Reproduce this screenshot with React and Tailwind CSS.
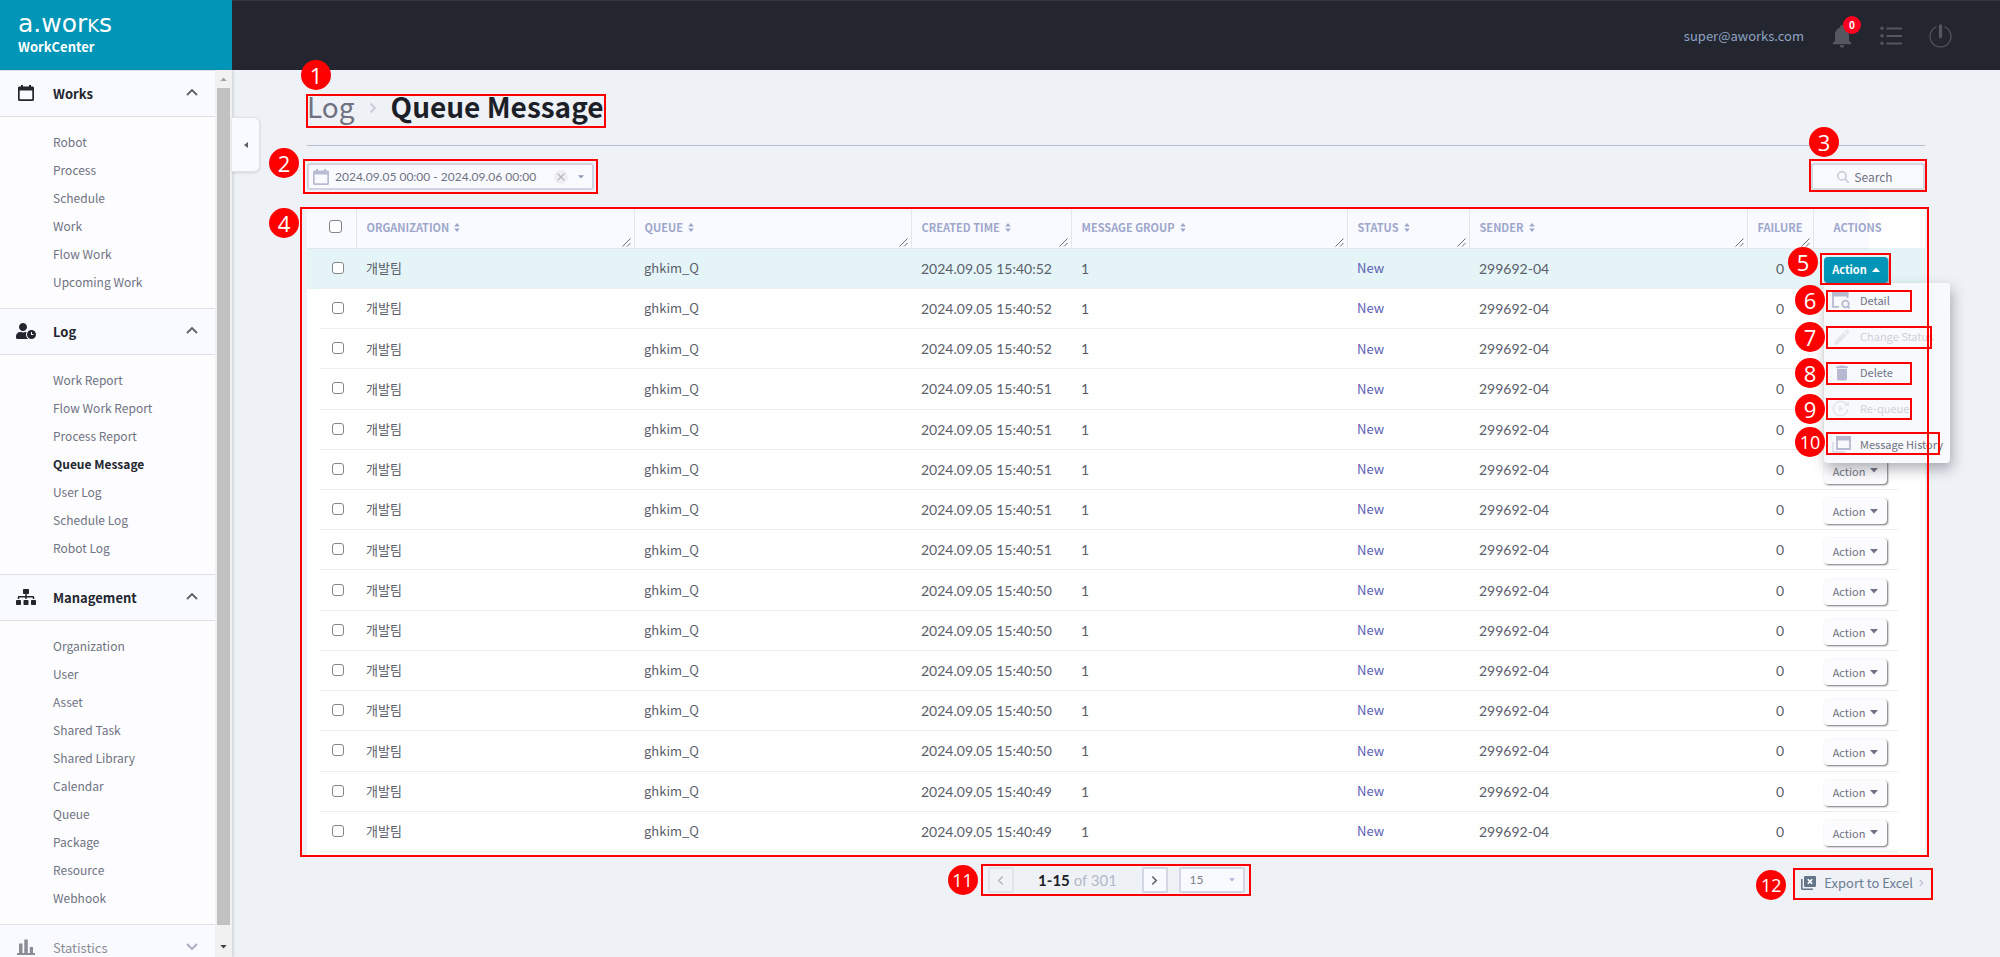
import React from "react";
import { FaSitemap, FaUserClock } from "react-icons/fa";
import { MdDelete, MdEdit, MdNotifications } from "react-icons/md";

const SANS = "font-['Noto_Sans_CJK_KR','Noto_Sans',sans-serif]";
const NUM = "font-['Lato','Noto_Sans_CJK_KR',sans-serif]";

const CalendarIcon = ({ className }) => (
  <svg viewBox="0 0 16 16" className={className} fill="currentColor" aria-hidden="true">
    <path d="M3 0h2v1.5h6V0h2v1.5h1.6c.8 0 1.4.6 1.4 1.4v11.7c0 .8-.6 1.4-1.4 1.4H1.400C.6 16 0 15.400 0 14.600V2.900c0-.8.6-1.400 1.400-1.400H3V0zM1.700 5.500v8.800h12.600V5.500H1.700z" />
  </svg>
);

const BarsIcon = ({ className }) => (
  <svg viewBox="0 0 18 16" className={className} fill="currentColor" aria-hidden="true">
    <path d="M0 14h18v2H0zM2 4.500h3.500V14H2zM7.300 0.500h3.500V14H7.300zM12.800 8h3.200V14h-3.200z" />
  </svg>
);

const Chevron = ({ dir, className }) => {
  const d = { up: "M2 8l5-5 5 5", down: "M2 3l5 5 5-5" }[dir];
  return (
    <svg viewBox="0 0 14 11" className={className} fill="none" stroke="currentColor" strokeWidth="1.8" aria-hidden="true">
      <path d={d} />
    </svg>
  );
};

const SideChevron = ({ left, className }) => (
  <svg viewBox="0 0 8 12" className={className} fill="none" stroke="currentColor" strokeWidth="1.8" aria-hidden="true">
    <path d={left ? "M6.500 1.500L2 6l4.500 4.500" : "M1.500 1.500L6 6l-4.500 4.500"} />
  </svg>
);

const Caret = ({ up, className }) => (
  <svg viewBox="0 0 8 5" className={className} fill="currentColor" aria-hidden="true">
    <path d={up ? "M0 5l4-4.500L8 5z" : "M0 0h8L4 4.500z"} />
  </svg>
);

const SortIcon = () => (
  <svg viewBox="0 0 6 9" className="h-[9px] w-[6px] shrink-0" fill="currentColor" aria-hidden="true">
    <path d="M3 0l2.800 3.400H.2zM3 9L.2 5.600h5.600z" />
  </svg>
);

const Grip = () => (
  <svg viewBox="0 0 9 9" className="absolute bottom-px right-[3px] size-[9px]" stroke="#6f6f73" strokeWidth="1" aria-hidden="true">
    <path d="M0.500 8.500l8-8M5 8.500l3.500-3.500" />
  </svg>
);

const DetailIcon = () => (
  <svg viewBox="0 0 18 17" className="h-[17px] w-[18px]" fill="none" stroke="#b6b9d0" aria-hidden="true">
    <path d="M7 14.800H1V1.500h14.500V6" strokeWidth="1.800" />
    <path d="M0.100 0h16.300v4.500H0.100z" fill="#b6b9d0" stroke="none" />
    <circle cx="13.500" cy="12" r="3.300" strokeWidth="1.800" />
    <path d="M15.700 14.300l2 2" strokeWidth="1.800" />
  </svg>
);

const RequeueIcon = () => (
  <svg viewBox="0 0 17 17" className="size-[17px]" fill="none" stroke="#e4e6ef" aria-hidden="true">
    <path d="M14.800 5A7.200 7.200 0 1 0 15.700 9" strokeWidth="1.700" />
    <path d="M12 6h5V1z" fill="#e4e6ef" stroke="none" />
    <path d="M6.800 5.200l4.700 3.300-4.700 3.300z" fill="#e4e6ef" stroke="none" />
  </svg>
);

const HistoryIcon = () => (
  <svg viewBox="0 0 19 17" className="h-[17px] w-[19px]" fill="none" aria-hidden="true">
    <path d="M1 6v10h12" stroke="#dcdeea" strokeWidth="1.800" />
    <path d="M5 1.500h13V13H5z" stroke="#b6b9d0" strokeWidth="1.800" />
    <path d="M4.100 0h14.800v4.500H4.100z" fill="#b6b9d0" />
  </svg>
);

const ExcelIcon = () => (
  <svg viewBox="0 0 15 14" className="h-[14px] w-[15px]" aria-hidden="true">
    <path d="M0 3h1.600v9.400H12V14H1.200C.5 14 0 13.500 0 12.800z" fill="#66768a" />
    <path d="M4.200 0h9.600C14.500 0 15 .5 15 1.200v8.600c0 .7-.5 1.200-1.200 1.200H4.200C3.500 11 3 10.500 3 9.800V1.200C3 .5 3.500 0 4.200 0z" fill="#66768a" />
    <path d="M6.800 3.200l4.400 4.600M11.200 3.200L6.800 7.800" stroke="#fff" strokeWidth="1.600" />
  </svg>
);

/* Red outline around its positioned parent, with a numbered badge. */
function Mark({ n, box, badge }) {
  return (
    <span className={`pointer-events-none absolute z-30 border-2 border-[#ff0000] ${box}`}>
      <span
        className={`absolute flex size-[30px] items-center justify-center rounded-full bg-[#ff0000] font-['Open_Sans',sans-serif] font-normal leading-none text-white ${n > 9 ? "text-lg" : "text-[22px]"} ${badge}`}
      >
        {n}
      </span>
    </span>
  );
}

const SECTIONS = [
  {
    title: "Works",
    icon: <CalendarIcon className="size-4" />,
    items: ["Robot", "Process", "Schedule", "Work", "Flow Work", "Upcoming Work"],
  },
  {
    title: "Log",
    icon: <FaUserClock className="size-5" />,
    items: ["Work Report", "Flow Work Report", "Process Report", "Queue Message", "User Log", "Schedule Log", "Robot Log"],
  },
  {
    title: "Management",
    icon: <FaSitemap className="size-5" />,
    items: ["Organization", "User", "Asset", "Shared Task", "Shared Library", "Calendar", "Queue", "Package", "Resource", "Webhook"],
  },
  { title: "Statistics", icon: <BarsIcon className="h-4 w-[18px]" />, closed: true, items: [] },
];

function Sidebar() {
  return (
    <aside className="flex w-[232px] shrink-0 overflow-hidden bg-[#fdfdff] shadow-[1px_0_3px_rgba(90,95,120,0.25)]">
      <nav className="flex min-w-0 flex-1 flex-col overflow-hidden">
        {SECTIONS.map((s) => (
          <section key={s.title} className="shrink-0">
            <button
              type="button"
              className={`flex h-[46px] w-full items-center border-t border-[#dfe1ea] bg-[#f9faff] pb-[2px] pr-4 ${s.closed ? "text-[#8b8d96]" : "text-[#23262f]"}`}
            >
              <span className="flex w-[53px] justify-center pr-px">{s.icon}</span>
              <span className={`flex-1 pt-[2px] text-left text-[13px] ${s.closed ? "" : "font-bold"}`}>{s.title}</span>
              <Chevron dir={s.closed ? "down" : "up"} className={`h-[11px] w-[14px] ${s.closed ? "text-[#a9acbd]" : "text-[#5d606b]"}`} />
            </button>
            {!s.closed && (
              <ul className="border-t border-[#dfe1ea] pb-3 pt-[11px]">
                {s.items.map((i) => (
                  <li key={i}>
                    <a
                      href="#"
                      className={`block h-7 pl-[53px] text-xs leading-7 ${i === "Queue Message" ? "font-bold text-[#23262f]" : "text-[#6f7282]"}`}
                    >
                      {i}
                    </a>
                  </li>
                ))}
              </ul>
            )}
          </section>
        ))}
      </nav>
      <div className="flex w-[17px] flex-col items-center bg-[#f1f1f1]" aria-hidden="true">
        <span className="flex h-[18px] items-center text-[#a3a3a3]">
          <Caret up className="h-1 w-[7px]" />
        </span>
        <span className="w-[13px] flex-1 bg-[#c1c1c1]" />
        <span className="flex h-8 pt-5 text-[#404040]">
          <Caret className="h-1 w-[7px]" />
        </span>
      </div>
    </aside>
  );
}

function TopBar() {
  return (
    <header className="flex h-[70px] shrink-0">
      <div className="flex w-[232px] flex-col bg-[#0195b7] pl-[18px] pt-3 text-white">
        <span className="font-['DejaVu_Sans',sans-serif] text-[25px] leading-6">
          a.wor<span className="[font-variant-caps:small-caps]">k</span>s
        </span>
        <span className="text-[13px] font-bold leading-[22px]">WorkCenter</span>
      </div>
      <div className="flex flex-1 items-center justify-end border-t border-[#33363f] bg-[#23262f] pr-12 text-[#54575f]">
        <span className="mr-6 text-[13px] text-[#8fa3c4]">super@aworks.com</span>
        <button type="button" aria-label="Notifications" className="relative mr-6">
          <MdNotifications className="size-7" />
          <span className="absolute -top-[6px] left-[15px] flex size-[18px] items-center justify-center rounded-full bg-[#ff001f] text-[10px] font-bold leading-none text-white">
            0
          </span>
        </button>
        <button type="button" aria-label="List" className="mr-[27px]">
          <svg viewBox="0 0 22 19" className="h-[19px] w-[22px]" stroke="currentColor" strokeWidth="2" fill="currentColor">
            <path d="M6.500 2.500H22M6.500 10H22M6.500 17.500H22" />
            <g stroke="none">
              <circle cx="2" cy="2.300" r="1.700" />
              <circle cx="2" cy="9.800" r="1.700" />
              <circle cx="2" cy="17.200" r="1.700" />
            </g>
          </svg>
        </button>
        <button type="button" aria-label="Log out">
          <svg viewBox="0 0 23 24" className="h-6 w-[23px]" fill="none" stroke="currentColor">
            <path d="M7.500 2.700a10.500 10.500 0 1 0 8 0" strokeWidth="1.200" />
            <path d="M11.500 1.800v11" strokeWidth="3.200" strokeLinecap="round" />
          </svg>
        </button>
      </div>
    </header>
  );
}

const COLUMNS = [
  { label: "Organization", width: "w-[278px]", sort: true, grip: true },
  { label: "Queue", width: "w-[277px]", sort: true, grip: true },
  { label: "Created Time", width: "w-[160px]", sort: true, grip: true },
  { label: "Message Group", width: "w-[276px]", sort: true, grip: true },
  { label: "Status", width: "w-[122px]", sort: true, grip: true },
  { label: "Sender", width: "w-[278px]", sort: true, grip: true },
  { label: "Failure", width: "w-[66px]", grip: true, right: true },
];

const ROWS = [52, 52, 52, 51, 51, 51, 51, 51, 50, 50, 50, 50, 50, 49, 49];

const MENU = [
  { label: "Detail", icon: <DetailIcon />, box: "left-[2px] top-[7px] h-[22px] w-[86px]", badge: "-left-[33px] -top-[7px]" },
  {
    label: "Change Status",
    icon: <MdEdit className="size-5 text-[#e4e6ef]" />,
    off: true,
    box: "left-[2px] top-[7px] h-[23px] w-[106px]",
    badge: "-left-[33px] -top-[6px]",
  },
  {
    label: "Delete",
    icon: <MdDelete className="size-5 text-[#b6b9d0]" />,
    box: "left-[2px] top-[7px] h-[23px] w-[86px]",
    badge: "-left-[33px] -top-[6px]",
  },
  { label: "Re-queue", icon: <RequeueIcon />, off: true, box: "left-[2px] top-[7px] h-[22px] w-[86px]", badge: "-left-[33px] -top-[6px]" },
  {
    label: "Message History",
    icon: <HistoryIcon />,
    box: "left-[2px] top-[5px] h-[23px] w-[114px]",
    badge: "-left-[33px] -top-[7px]",
  },
];

function ActionMenu() {
  return (
    <ul className="absolute left-0 top-full z-20 w-[126px] rounded-b bg-[#f8f9fd] shadow-[2px_6px_14px_rgba(60,60,70,0.4)]">
      {MENU.map((m, i) => (
        <li key={m.label} className="relative">
          <button
            type="button"
            disabled={m.off}
            className={`flex h-9 w-full items-center pl-2 text-left text-[11px] ${m.off ? "text-[#d0d1d8]" : "text-[#6f7282]"}`}
          >
            <span className="flex w-7 shrink-0 items-center">{m.icon}</span>
            <span className="whitespace-nowrap">{m.label}</span>
          </button>
          <Mark n={i + 6} box={m.box} badge={m.badge} />
        </li>
      ))}
    </ul>
  );
}

const Check = ({ label, className }) => (
  <input
    type="checkbox"
    aria-label={label}
    className={`block appearance-none rounded-[3px] border border-[#858588] bg-white ${className}`}
  />
);

function QueueTable() {
  return (
    <div className="relative bg-white pb-[3px]">
      <table className="h-[643px] w-full table-fixed border-collapse">
        <thead>
          <tr className="h-[39px] bg-[#f9faff] text-left text-[11px] font-bold uppercase text-[#9ea7cb]">
            <th className="w-[49px] border-b border-r border-[#e4e6ee] p-0 pb-1 pl-[22px]">
              <Check label="Select all rows" className="size-[13px]" />
            </th>
            {COLUMNS.map((c) => (
              <th key={c.label} className={`relative border-b border-r border-[#e4e6ee] p-0 pb-[2px] pl-[10px] ${c.width}`}>
                <span className={`flex items-center gap-[5px] ${c.right ? "justify-end pr-[10px]" : ""}`}>
                  {c.label}
                  {c.sort && <SortIcon />}
                </span>
                {c.grip && <Grip />}
              </th>
            ))}
            <th className="border-b border-[#e4e6ee] p-0 pb-[2px] pl-5">Actions</th>
          </tr>
        </thead>
        <tbody>
          {ROWS.map((sec, i) => (
            <tr
              key={i}
              className={`relative text-[13px] text-[#5b5e6b] after:absolute after:bottom-0 after:left-[13px] after:right-[27px] after:h-px after:bg-[#ebecf1] ${i === 0 ? "bg-[#e4f4f7]" : ""}`}
            >
              <td className="p-0 pb-[2px] pl-[25px]">
                <Check label={`Select row ${i + 1}`} className="size-3" />
              </td>
              <td className="p-0 pb-[2px] pl-[10px]">개발팀</td>
              <td className="p-0 pb-[2px] pl-[10px]">ghkim_Q</td>
              <td className={`whitespace-nowrap p-0 pl-[10px] text-sm ${NUM}`}>2024.09.05 15:40:{sec}</td>
              <td className={`p-0 pl-[10px] text-sm ${NUM}`}>1</td>
              <td className="p-0 pb-[2px] pl-[10px] text-[#5c60b4]">New</td>
              <td className={`p-0 pl-[10px] text-sm ${NUM}`}>299692-04</td>
              <td className={`p-0 pr-[29px] text-right text-sm ${NUM}`}>0</td>
              <td className="p-0 pl-[11px] pt-[2px]">
                {i === 0 ? (
                  <div className="relative w-16">
                    <button
                      type="button"
                      aria-expanded="true"
                      className="flex h-[26px] w-16 items-center justify-center gap-[5px] rounded bg-[#0195b7] text-[11px] font-bold text-white shadow-[1px_1px_2px_rgba(60,60,70,0.5)]"
                    >
                      Action
                      <Caret up className="h-[5px] w-2" />
                    </button>
                    <Mark n={5} box="-left-1 -top-1 h-8 w-[71px]" badge="-left-[34px] -top-[8px]" />
                    <ActionMenu />
                  </div>
                ) : (
                  <button
                    type="button"
                    className="flex h-[26px] w-[63px] items-center justify-center gap-[5px] rounded bg-[#fcfcfe] text-[11px] text-[#6f7282] shadow-[1px_1px_2px_rgba(40,40,45,0.65)]"
                  >
                    Action
                    <Caret className="h-[5px] w-2" />
                  </button>
                )}
              </td>
            </tr>
          ))}
        </tbody>
      </table>
      <Mark n={4} box="-left-[7px] -right-1 -top-[2px] -bottom-[2px]" badge="-left-[33px] -top-px" />
    </div>
  );
}

function Footer() {
  const box = "rounded-[2px] border-2 border-[#d3d6e3] bg-[#f9faff]";
  return (
    <div className="grid grid-cols-[1fr_auto_1fr] pt-3">
      <div className="relative col-start-2 flex h-[26px] items-center">
        <button type="button" disabled aria-label="Previous page" className="flex size-[26px] items-center justify-center rounded-[2px] border-2 border-[#e2e4ec] bg-[#f1f2f5] text-[#b5b7bf]">
          <SideChevron left className="h-[11px] w-[7px]" />
        </button>
        <p className={`w-[128px] text-center text-[15px] text-[#b4bac9] ${NUM}`}>
          <b className="text-[#1c1f28]">1-15</b> of 301
        </p>
        <button type="button" aria-label="Next page" className={`flex size-[26px] items-center justify-center text-[#5d606b] ${box}`}>
          <SideChevron className="h-[11px] w-[7px]" />
        </button>
        <span className="relative ml-[11px]">
          <select aria-label="Rows per page" className={`block h-[26px] w-[66px] appearance-none pl-[9px] text-xs text-[#7c7f8d] ${box} ${NUM}`}>
            <option>15</option>
          </select>
          <Caret className="pointer-events-none absolute right-[10px] top-[11px] h-1 w-[6px] text-[#a7b4d6]" />
        </span>
        <Mark n={11} box="-left-[7px] -right-[6px] -top-[3px] -bottom-[3px]" badge="-left-[35px] -top-px" />
      </div>
      <div className="flex justify-end">
        <a href="#" className="relative mt-[3px] flex h-[26px] items-center pr-px text-[13px] text-[#6b7b90]">
          <ExcelIcon />
          <span className="ml-2">Export to Excel</span>
          <SideChevron className="ml-[6px] h-2 w-[5px] text-[#b4bac9]" />
          <Mark n={12} box="-left-2 -right-2 -top-[2px] -bottom-1" badge="-left-[39px] top-0" />
        </a>
      </div>
    </div>
  );
}

export default function App() {
  return (
    <div className={`flex h-screen flex-col overflow-hidden bg-[#eef1f6] ${SANS}`}>
      <TopBar />
      <div className="flex min-h-0 flex-1">
        <Sidebar />
        <button
          type="button"
          aria-label="Collapse menu"
          className="mt-[47px] flex h-[55px] w-7 shrink-0 items-center justify-center rounded-r-md border border-l-0 border-[#dfe1ea] bg-[#f9faff] text-[#5d606b] shadow-sm"
        >
          <svg viewBox="0 0 4 6" className="h-[6px] w-1" fill="currentColor">
            <path d="M4 0v6L0 3z" />
          </svg>
        </button>
        <main className="min-w-0 flex-1 pl-[47px] pr-[75px] pt-px">
          <div className="flex h-[75px] border-b border-[#b9bdd0] pt-[21px]">
            <h1 className="relative flex h-7 items-center text-[28px] leading-7">
              <span className="text-[#6f7282]">Log</span>
              <SideChevron className="mx-[14px] mt-1 h-3 w-2 text-[#c8cbd8]" />
              <span className="font-bold text-[#1c1f28]">Queue Message</span>
              <Mark n={1} box="-left-px -right-[2px] top-[2px] h-[34px]" badge="-left-[7px] -top-[36px]" />
            </h1>
          </div>
          <div className="flex items-center justify-between pt-[17px]">
            <div className="relative flex h-[27px] w-[287px] items-center rounded-[3px] border-2 border-[#cfd3e2] bg-[#f9faff] pl-1">
              <CalendarIcon className="size-4 text-[#b8bcd2]" />
              <input
                aria-label="Date range"
                readOnly
                value="2024.09.05 00:00 - 2024.09.06 00:00"
                className={`ml-[6px] w-[219px] bg-transparent text-xs text-[#6f7282] outline-none ${NUM}`}
              />
              <button type="button" aria-label="Clear" className="flex size-[14px] shrink-0 items-center justify-center rounded-full bg-[#eeeef2]">
                <svg viewBox="0 0 8 8" className="size-2" stroke="#b4b6c0" strokeWidth="1.100">
                  <path d="M0.500 0.500l7 7M7.500 0.500l-7 7" />
                </svg>
              </button>
              <Caret className="ml-[10px] h-1 w-[6px] text-[#8f9ab9]" />
              <Mark n={2} box="-left-[6px] -right-[6px] -top-[6px] -bottom-[6px]" badge="-left-[36px] -top-[13px]" />
            </div>
            <button
              type="button"
              className="relative flex h-[27px] w-[114px] items-center justify-center gap-[5px] rounded-[3px] border-2 border-[#d3d6e3] bg-[#f9faff] pr-[6px] text-xs text-[#6f7282]"
            >
              <svg viewBox="0 0 12 12" className="size-3" fill="none" stroke="#c3c6d6" strokeWidth="1.500">
                <circle cx="4.900" cy="4.900" r="4.100" />
                <path d="M8 8l3.600 3.600" />
              </svg>
              Search
              <Mark n={3} box="-left-1 -right-1 -top-[6px] -bottom-1" badge="-left-[2px] -top-[34px]" />
            </button>
          </div>
          <div className="pt-[19px]">
            <QueueTable />
          </div>
          <Footer />
        </main>
      </div>
    </div>
  );
}
